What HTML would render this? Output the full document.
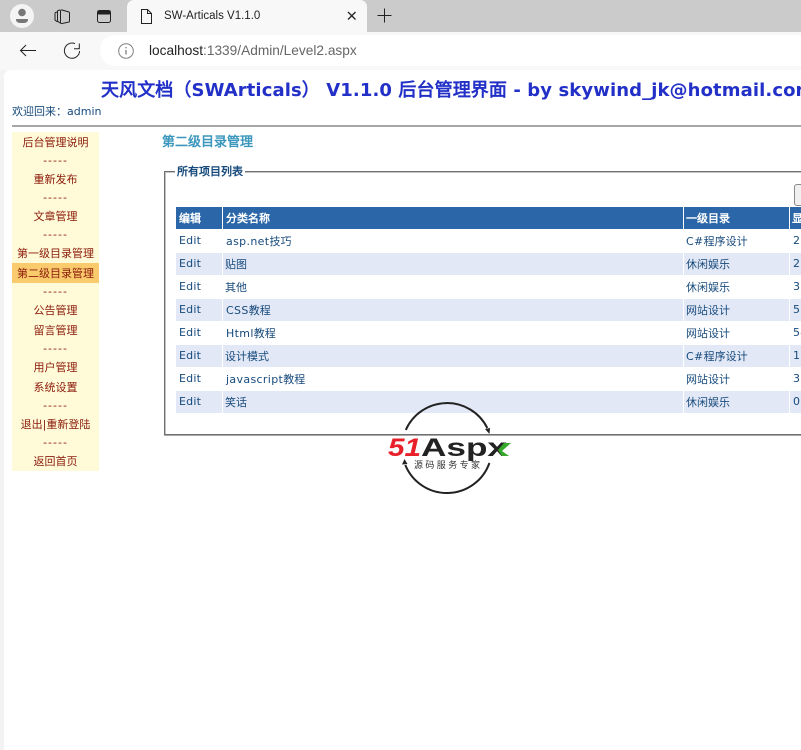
<!DOCTYPE html>
<html><head><meta charset="utf-8"><title>SW-Articals V1.1.0</title>
<style>
html,body{margin:0;padding:0;width:801px;height:737px;overflow:hidden;background:#f3f3f3}
*{box-sizing:border-box}
.a{position:absolute;white-space:nowrap}
body{font-family:"DejaVu Sans","WenQuanYi Zen Hei",sans-serif;font-size:11px;color:#174a7c}
.s{position:absolute;left:12px;width:87px;text-align:center;color:#8b1a0a;font-size:11px;line-height:20px;height:20px;padding-top:1px}
.d{letter-spacing:1px}
.r{position:absolute;left:176px;height:22px}
.c{position:absolute;top:0;height:22px;line-height:21px;padding-top:1px;font-size:11px;color:#174a7c;white-space:nowrap;overflow:hidden}
.e{line-height:19px;letter-spacing:.2px}
.l{letter-spacing:.35px}
.h{color:#fff;background:#2b67a8;font-weight:bold}
.b{background:#e2e8f6}
</style></head><body>
<div class="a" style="left:0;top:0;width:801px;height:32px;background:#cbcbcb"></div>
<div class="a" style="left:127px;top:0;width:240px;height:32px;background:#f8f8f8;border-radius:7px 7px 0 0"></div>
<div class="a" style="left:0;top:32px;width:801px;height:38px;background:#f8f8f8"></div>
<div class="a" style="left:100px;top:35px;width:720px;height:31px;background:#fff;border-radius:15px"></div>
<div class="a" style="left:4px;top:70px;width:810px;height:680px;background:#fff;border-radius:7px 0 0 0"></div>
<svg class="a" style="left:0;top:0" width="400" height="70" fill="none" stroke="#222" stroke-width="1">
<circle cx="22" cy="16" r="12" fill="#f4f4f4" stroke="none"/>
<circle cx="22" cy="12.500" r="3.800" fill="#777" stroke="none"/>
<path d="M16 19h12v1a4 3 0 0 1-4 3h-4a4 3 0 0 1-4-3z" fill="#777" stroke="none"/>
<path d="M62 23.500l7-1.500a1 1 0 0 0 .5-1V13a1 1 0 0 0-.5-1L62 10a1 1 0 0 0-1.500 1v11.500a1 1 0 0 0 1.500 1z"/>
<path d="M60 10l-2 .5a1 1 0 0 0-.5 1V21l2.500 2"/>
<path d="M57 12l-1.500 .5a1 1 0 0 0-.5 1V20l2.500 2"/>
<rect x="97.500" y="10.500" width="13" height="12" rx="2"/>
<path d="M98 11h12v3H98z" fill="#222"/>
<path d="M141.500 9.500h6l4 4v10h-10zM147.500 9.500v4h4"/>
<path d="M348 12l7.500 7.500M355.500 12l-7.500 7.500" stroke-width="1.300"/>
<path d="M384.500 8.500v14M377.500 15.500h14"/>
<path d="M20.500 50.500h15.500M26 45l-5.500 5.500 5.500 5.500"/>
<path d="M75 43.700A7.600 7.600 0 1 0 79.600 51"/>
<path d="M79.300 43.500v5.200H74"/>
<circle cx="126" cy="51" r="7.300" stroke="#808080"/>
<path d="M126 50v4.500M126 47v1.400" stroke="#808080" stroke-width="1.300"/>
</svg>
<div class="a" style="left:164px;top:7px;font:11.5px/18px 'Liberation Sans',sans-serif;color:#222">SW-Articals V1.1.0</div>
<div class="a" style="left:149px;top:42px;font:13.7px/18px 'Liberation Sans',sans-serif;color:#666"><span style="color:#222">localhost</span>:1339/Admin/Level2.aspx</div>

<div class="a" style="left:101px;top:80px;font-size:18px;line-height:22px;font-weight:bold;color:#2230c8;letter-spacing:.1px">天风文档（SWArticals） V1.1.0 后台管理界面 - by skywind_jk@hotmail.com</div>
<div class="a" style="left:12px;top:105px;line-height:14px;font-size:11px;color:#174a7c">欢迎回来：admin</div>
<div class="a" style="left:12px;top:125px;width:800px;height:2px;background:#a6a6a6"></div>

<div class="a" style="left:12px;top:132px;width:87px;height:339px;background:#fffbd9"></div>
<div class="a" style="left:12px;top:263px;width:87px;height:20px;background:#f9cb6c"></div>
<div class="s" style="top:132px">后台管理说明</div>
<div class="s d" style="top:150px">-----</div>
<div class="s" style="top:169px">重新发布</div>
<div class="s d" style="top:187px">-----</div>
<div class="s" style="top:206px">文章管理</div>
<div class="s d" style="top:224px">-----</div>
<div class="s" style="top:243px">第一级目录管理</div>
<div class="s" style="top:263px">第二级目录管理</div>
<div class="s d" style="top:281px">-----</div>
<div class="s" style="top:300px">公告管理</div>
<div class="s" style="top:320px">留言管理</div>
<div class="s d" style="top:338px">-----</div>
<div class="s" style="top:357px">用户管理</div>
<div class="s" style="top:377px">系统设置</div>
<div class="s d" style="top:395px">-----</div>
<div class="s" style="top:414px">退出|重新登陆</div>
<div class="s d" style="top:432px">-----</div>
<div class="s" style="top:451px">返回首页</div>

<div class="a" style="left:162px;top:134px;font-size:13px;line-height:17px;font-weight:bold;color:#3b97bd">第二级目录管理</div>

<div class="a" style="left:164px;top:171px;width:660px;height:264px;border:1px solid #6f6f6f;box-shadow:inset 1px 1px 0 #c4c4c4,0 1px 0 #aaa"></div>
<div class="a" style="left:175px;top:165px;background:#fff;padding:0 2px;font-size:11px;line-height:14px;font-weight:bold;color:#174a7c">所有项目列表</div>
<div class="a" style="left:794px;top:184px;width:20px;height:22px;background:#f0f0f0;border:1px solid #8a8a8a;border-radius:3px"></div>

<div class="r" style="top:207px"><div class="c h" style="left:0;width:46px;padding-left:3px">编辑</div><div class="c h" style="left:47px;width:460px;padding-left:3px">分类名称</div><div class="c h" style="left:508px;width:105px;padding-left:2px">一级目录</div><div class="c h" style="left:614px;width:20px;padding-left:2px">显示</div></div>

<div class="r" style="top:230px"><div class="c e" style="left:0;width:46px;padding-left:3px">Edit</div><div class="c" style="left:47px;width:460px;padding-left:3px"><span class="l">asp.net</span>技巧</div><div class="c" style="left:508px;width:105px;padding-left:2px"><span class="l">C#</span>程序设计</div><div class="c e" style="left:614px;width:20px;padding-left:3px">2</div></div>
<div class="r" style="top:253px"><div class="c b e" style="left:0;width:46px;padding-left:3px">Edit</div><div class="c b" style="left:47px;width:460px;padding-left:2px">贴图</div><div class="c b" style="left:508px;width:105px;padding-left:2px">休闲娱乐</div><div class="c b e" style="left:614px;width:20px;padding-left:3px">2</div></div>
<div class="r" style="top:276px"><div class="c e" style="left:0;width:46px;padding-left:3px">Edit</div><div class="c" style="left:47px;width:460px;padding-left:2px">其他</div><div class="c" style="left:508px;width:105px;padding-left:2px">休闲娱乐</div><div class="c e" style="left:614px;width:20px;padding-left:3px">3</div></div>
<div class="r" style="top:299px"><div class="c b e" style="left:0;width:46px;padding-left:3px">Edit</div><div class="c b" style="left:47px;width:460px;padding-left:3px"><span class="l">CSS</span>教程</div><div class="c b" style="left:508px;width:105px;padding-left:2px">网站设计</div><div class="c b e" style="left:614px;width:20px;padding-left:3px">5</div></div>
<div class="r" style="top:322px"><div class="c e" style="left:0;width:46px;padding-left:3px">Edit</div><div class="c" style="left:47px;width:460px;padding-left:3px"><span class="l">Html</span>教程</div><div class="c" style="left:508px;width:105px;padding-left:2px">网站设计</div><div class="c e" style="left:614px;width:20px;padding-left:3px">54</div></div>
<div class="r" style="top:345px"><div class="c b e" style="left:0;width:46px;padding-left:3px">Edit</div><div class="c b" style="left:47px;width:460px;padding-left:2px">设计模式</div><div class="c b" style="left:508px;width:105px;padding-left:2px"><span class="l">C#</span>程序设计</div><div class="c b e" style="left:614px;width:20px;padding-left:3px">1</div></div>
<div class="r" style="top:368px"><div class="c e" style="left:0;width:46px;padding-left:3px">Edit</div><div class="c" style="left:47px;width:460px;padding-left:3px"><span class="l">javascript</span>教程</div><div class="c" style="left:508px;width:105px;padding-left:2px">网站设计</div><div class="c e" style="left:614px;width:20px;padding-left:3px">3</div></div>
<div class="r" style="top:391px"><div class="c b e" style="left:0;width:46px;padding-left:3px">Edit</div><div class="c b" style="left:47px;width:460px;padding-left:2px">笑话</div><div class="c b" style="left:508px;width:105px;padding-left:2px">休闲娱乐</div><div class="c b e" style="left:614px;width:20px;padding-left:3px">0</div></div>

<svg class="a" style="left:380px;top:395px" width="140" height="105" fill="none">
<path d="M25.800 35A45 45 0 0 1 107.300 33" stroke="#222" stroke-width="2"/>
<path d="M109.500 39l-4.500-5 5-1z" fill="#222"/>
<path d="M25.300 70A45 45 0 0 0 109.400 68" stroke="#222" stroke-width="2"/>
<path d="M24.500 64l-2.500 5.500 5.500-.5z" fill="#222"/>
<text x="8" y="61" font-family="Liberation Sans,sans-serif" font-size="25" font-weight="bold" font-style="italic" fill="#e8202a" textLength="33" lengthAdjust="spacingAndGlyphs">51</text>
<text x="41" y="61" font-family="Liberation Sans,sans-serif" font-size="25" font-weight="bold" fill="#222" textLength="86" lengthAdjust="spacingAndGlyphs">Aspx</text>
<path d="M118 55l6-7h7l-9 8 7 5h-7z" fill="#36a82c"/>
<text x="34" y="73" font-family="WenQuanYi Zen Hei,sans-serif" font-size="9" fill="#333" textLength="66">源码服务专家</text>
</svg>
</body></html>
